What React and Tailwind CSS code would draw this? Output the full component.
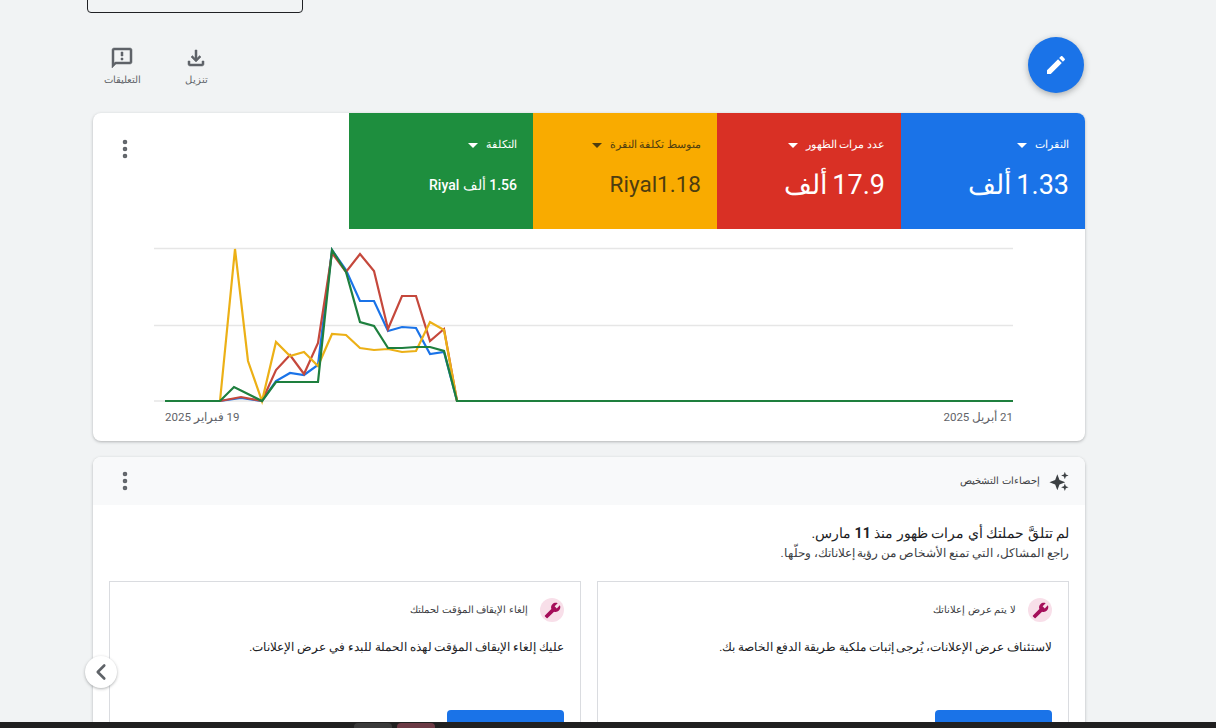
import { ChevronLeft, EllipsisVertical } from "lucide-react";

const metrics = [
  { label: "النقرات", value: "1.33 ألف", bg: "bg-[#1a73e8]", text: "text-white", size: "text-[27px] [word-spacing:-2px]" },
  { label: "عدد مرات الظهور", value: "17.9 ألف", bg: "bg-[#d93025]", text: "text-white", size: "text-[27px] [word-spacing:-2px]" },
  { label: "متوسط تكلفة النقرة", value: "Riyal1.18", bg: "bg-[#f9ab00]", text: "text-[#4d3d10]", size: "text-[22.500px]" },
  { label: "التكلفة", value: "1.56 ألف Riyal", bg: "bg-[#1e8e3e]", text: "text-white", size: "text-[14px] font-medium" },
];

const blue = "165,401 220,401 241,398 262,401 276,381 290,373 304,375 318,365 332,250 346,270 360,301 374,301 388,331 402,327 416,328 430,354 444,352 457,401 1013,401";
const red = "165,401 220,401 241,397 262,401 276,370 290,355 304,374 318,343 332,253 346,272 360,254 374,271 388,329 402,296 416,296 430,341 444,329 457,401 1013,401";
const yellow = "165,401 220,401 235,249 248,361 262,401 276,342 290,356 304,352 318,366 332,334 346,335 360,348 374,350 388,349 402,352 416,351 430,322 444,330 457,401 1013,401";
const green = "165,401 220,401 234,387 248,394 262,401 276,382 290,382 304,382 318,382 332,250 346,272 360,322 374,326 388,348 402,348 416,347 430,347 444,351 457,401 1013,401";

function Metric({ m }) {
  return (
    <div className={`w-[184px] h-[116px] shrink-0 px-4 pt-[25px] flex flex-col items-start ${m.bg} ${m.text}`}>
      <div className="flex items-center gap-2 h-[14px] text-[11px] leading-[14px]">
        <span>{m.label}</span>
        <span className="w-0 h-0 border-x-[5px] border-x-transparent border-t-[5px] border-t-current"></span>
      </div>
      <div className={`h-[36px] mt-[15px] flex items-center whitespace-nowrap ${m.size}`}>
        <bdi dir="rtl">{m.value}</bdi>
      </div>
    </div>
  );
}

function IssueCard({ title, body, className }) {
  return (
    <div className={`h-[170px] border border-[#dadce0] px-[16px] pt-[16px] flex flex-col ${className}`}>
      <div className="flex items-center gap-3 h-[24px]">
        <div className="w-6 h-6 rounded-full bg-[#f8dfe9] flex items-center justify-center">
          <svg width="17" height="17" viewBox="0 0 24 24" fill="#a50e5a" className="-scale-x-100">
            <path d="M22.700 19l-9.100-9.100c.9-2.300.4-5-1.500-6.900-2-2-5-2.400-7.400-1.300L9 6 6 9 1.600 4.700C.4 7.100.9 10.100 2.900 12.100c1.900 1.900 4.600 2.400 6.900 1.500l9.100 9.100c.4.400 1 .4 1.400 0l2.300-2.300c.5-.4.5-1.100.1-1.400z" />
          </svg>
        </div>
        <span className="text-[10.200px] text-[#3c4043]">{title}</span>
      </div>
      <p className="mt-[15px] text-[11.500px] leading-[20px] text-[#202124]">{body}</p>
      <div className="mt-auto w-[117px] h-[40px] rounded bg-[#1a73e8] shrink-0"></div>
    </div>
  );
}

export default function App() {
  return (
    <div dir="rtl" className="relative h-[728px] overflow-hidden bg-[#f1f3f4] font-['Roboto','Noto_Sans',sans-serif] text-[#202124]">
      {/* top field, cut by the window */}
      <div className="absolute left-[87px] top-[-20px] w-[216px] h-[33px] border border-[#202124] rounded" />

      <div className="h-[113px] pr-[132px] pl-[103px] flex justify-between">
        <button className="mt-[37px] w-14 h-14 rounded-full bg-[#1a73e8] shadow-[0_2px_6px_rgba(60,64,67,0.4)] flex items-center justify-center">
          <svg width="24" height="24" viewBox="0 0 24 24" fill="white">
            <path d="M3 17.250V21h3.750L17.810 9.940l-3.750-3.750L3 17.250zM20.710 7.040c.39-.39.39-1.020 0-1.410l-2.340-2.340c-.39-.39-1.020-.39-1.410 0l-1.830 1.830 3.750 3.750 1.830-1.830z" />
          </svg>
        </button>
        <div className="flex mt-[46px] gap-[36px] text-[10px] leading-[12px] text-[#5f6368] flex-row-reverse h-[44px]">
          <div className="flex flex-col items-center w-[38px]">
            <svg width="24" height="24" viewBox="0 0 24 24" fill="#5f6368" stroke="#5f6368" strokeWidth="0.500" className="shrink-0">
              <path d="M20 2H4c-1.100 0-1.990.9-1.990 2L2 22l4-4h14c1.100 0 2-.9 2-2V4c0-1.100-.9-2-2-2zm0 14H5.170L4 17.170V4h16v12zm-9-4h2v2h-2zm0-6h2v4h-2z" />
            </svg>
            <span className="mt-[4px] whitespace-nowrap">التعليقات</span>
          </div>
          <div className="flex flex-col items-center w-[38px]">
            <svg width="24" height="24" viewBox="0 0 24 24" fill="#5f6368" stroke="#5f6368" strokeWidth="0.500" className="shrink-0">
              <path d="M18 15v3H6v-3H4v3c0 1.100.9 2 2 2h12c1.100 0 2-.9 2-2v-3h-2zm-1-4l-1.410-1.410L13 12.170V4h-2v8.170L8.410 9.590 7 11l5 5 5-5z" />
            </svg>
            <span className="mt-[4px] whitespace-nowrap">تنزيل</span>
          </div>
        </div>
      </div>

      {/* chart card */}
      <div className="mr-[131px] w-[992px] h-[328px] bg-white rounded-lg shadow-[0_1px_3px_rgba(60,64,67,0.35)] overflow-hidden relative">
        <div className="flex">
          {metrics.map((m) => <Metric key={m.label} m={m} />)}
          <div className="flex-1 flex justify-end pl-[20px] pt-[24px]">
            <EllipsisVertical size={24} strokeWidth={2.6} className="text-[#5f6368]" />
          </div>
        </div>
        <svg className="absolute left-0 top-0 pointer-events-none" width="992" height="328" viewBox="93 113 992 328" fill="none">
          <path d="M154 248.500H1013M154 325.500H1013M154 401H1013" stroke="#e6e6e6" strokeWidth="1.500" />
          <polyline points={blue} stroke="#1a73e8" strokeWidth="2.200" />
          <polyline points={red} stroke="#c5483c" strokeWidth="2.200" />
          <polyline points={yellow} stroke="#ecb016" strokeWidth="2.200" />
          <polyline points={green} stroke="#1e7f3e" strokeWidth="2.200" />
        </svg>
        <div className="absolute left-[72px] right-[72px] top-[295px] flex justify-between text-[11.500px] leading-[18px] text-[#5f6368]">
          <span>21 أبريل 2025</span>
          <span>19 فبراير 2025</span>
        </div>
      </div>

      {/* diagnostics card */}
      <div className="mt-[16px] mr-[131px] w-[992px] h-[400px] bg-white rounded-t-lg shadow-[0_1px_3px_rgba(60,64,67,0.35)] overflow-hidden">
        <div className="h-[48px] bg-[#f8f9fa] flex items-center justify-between pr-[16px] pl-[20px]">
          <div className="flex items-center gap-[9px]">
            <svg width="20" height="20" viewBox="0 0 24 24" fill="#3c4043">
              <path d="M10 4l2.600 6.900L19.500 13.500l-6.900 2.600L10 23l-2.600-6.900L.5 13.500l6.900-2.600zM19 1l1.200 3.300L23.500 5.500l-3.300 1.200L19 10l-1.200-3.300L14.500 5.500l3.300-1.200zM19 15l1.200 3.300L23.500 19.500l-3.300 1.200L19 24l-1.200-3.300L14.500 19.500l3.300-1.200z" />
            </svg>
            <span className="text-[10.300px] text-[#3c4043]">إحصاءات التشخيص</span>
          </div>
          <EllipsisVertical size={24} strokeWidth={2.6} className="text-[#5f6368]" />
        </div>
        <div className="px-[16px] pt-[18px]">
          <p className="text-[14px] leading-[20px]">لم تتلقَّ حملتك أي مرات ظهور منذ <b>11</b> مارس.</p>
          <p className="text-[11.800px] leading-[20px] text-[#3c4043]">راجع المشاكل، التي تمنع الأشخاص من رؤية إعلاناتك، وحلّها.</p>
          <div className="mt-[18px] flex gap-[16px]">
            <IssueCard className="w-[472px]" title="لا يتم عرض إعلاناتك" body="لاستئناف عرض الإعلانات، يُرجى إثبات ملكية طريقة الدفع الخاصة بك." />
            <IssueCard className="w-[472px]" title="إلغاء الإيقاف المؤقت لحملتك" body="عليك إلغاء الإيقاف المؤقت لهذه الحملة للبدء في عرض الإعلانات." />
          </div>
        </div>
      </div>

      <button className="absolute left-[85px] top-[656px] w-8 h-8 rounded-full bg-white shadow-[0_1px_3px_rgba(60,64,67,0.4)] flex items-center justify-center">
        <ChevronLeft size={26} strokeWidth={2.4} className="text-[#5f6368]" />
      </button>

      {/* taskbar strip */}
      <div className="absolute left-0 right-0 bottom-0 h-[6px] bg-[#202020]">
        <div className="absolute left-[354px] top-[1px] w-[38px] h-[5px] rounded-t bg-[#3a3a3a]" />
        <div className="absolute left-[397px] top-[1px] w-[38px] h-[5px] rounded-t bg-[#6b3a44]" />
      </div>
    </div>
  );
}
